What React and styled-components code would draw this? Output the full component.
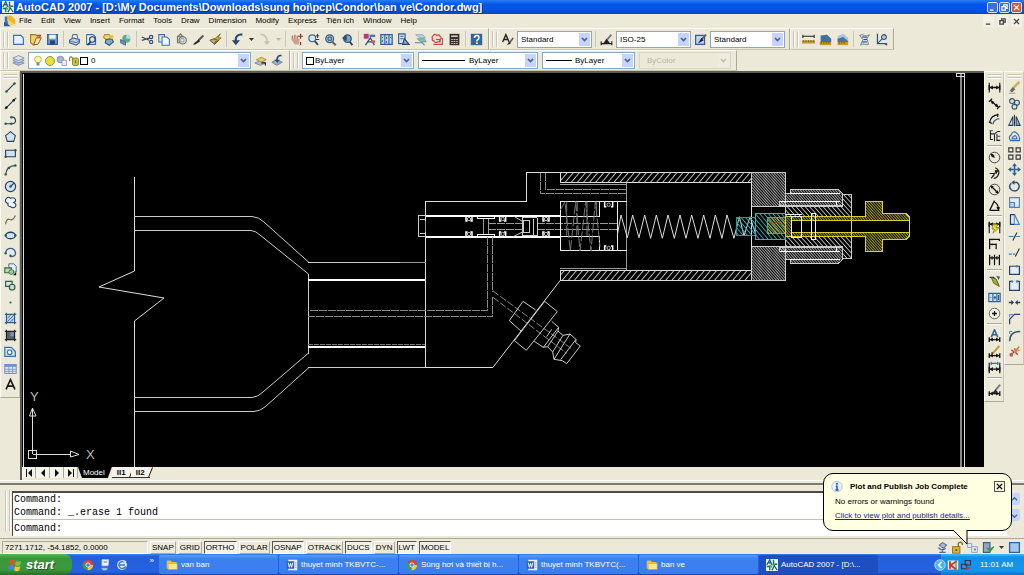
import React from 'react';
import styled, { createGlobalStyle, css } from 'styled-components';

const FACE = '#ece9d8';
const SHADOW = '#aca899';
const UI_FONT = '"Liberation Sans", Arial, sans-serif';

const GlobalStyle = createGlobalStyle`
  * { box-sizing: border-box; }
  body { margin: 0; background: ${FACE}; font-family: ${UI_FONT}; font-size: 8px; line-height: 12px; color: #000; }
  button, select, input { font: inherit; color: inherit; margin: 0; padding: 0; border: 0; background: none; border-radius: 0; }
  svg { display: block; flex: none; }
`;

/* ---------- icons, all drawn on a 16 x 16 grid ---------- */

const N = '#24405c';
const B = '#3f6fa8';
const L = '#cfe3f5';
const line = (d, c = N, w = 1.4, f = 'none') => <path d={d} stroke={c} strokeWidth={w} fill={f} />;
const dot = (x, y, c = '#2b5a50', r = 1.5) => <circle cx={x} cy={y} r={r} fill={c} />;
const dimBar = (y = 12) => (
  <>
    {line(`M2 ${y}H14M1.5 ${y - 3}V${y + 3}M14.5 ${y - 3}V${y + 3}`, '#111', 1.6)}
    <path d={`M2 ${y}l4-2.5v5zM14 ${y}l-4-2.5v5z`} fill="#111" />
  </>
);

const ICONS = {
  app: (
    <>
      <rect width="16" height="16" fill="#e9f3f2" />
      {line('M1 8L5 1l3 7M3 5h4', '#1d6b6e', 1.8)}
      {line('M10 1v6h5M1 10h4v5M8 15l3-6 4 6', '#1d6b6e', 1.8)}
      <path d="M5 8l3 3M9 9l3-3" stroke="#4aa36b" strokeWidth="2" />
    </>
  ),
  doc: (
    <>
      <path d="M1 2h5l4 6-3 6H1z" fill="#3f74c4" />
      <path d="M4 1h6l5 5v7L5 8z" fill="#f0b52c" />
      <path d="M4 5l11 9H6z" fill="#f7d469" />
      <path d="M0 9l9 6H0z" fill="#2d58a3" />
    </>
  ),
  newFile: line('M2 3h9l3 3v8H2z', B, 1.4, '#e7f2fc'),
  open: (
    <>
      {line('M2 2h6l5 4-7 9L2 12z', '#a8722c', 1.3, '#f6cf6e')}
      {line('M6 14l3-8h6l-4 8z', '#8c5a22', 1.2, '#fbe6a4')}
      {line('M10 3l4 0-1 3', '#b0452d', 1.6)}
    </>
  ),
  save: (
    <>
      {line('M2 2h12v12H2z', '#2f5f8f', 1.4, '#6d9ccc')}
      <rect x="4" y="2" width="8" height="5" fill="#e9f1f8" />
      <rect x="5" y="9" width="6" height="5" fill="#27486b" />
    </>
  ),
  plot: (
    <>
      {line('M5 6l1-4h5l1 5', '#56729a', 1.3, '#fff')}
      {line('M2 9l4-3 8 2v4l-4 3-8-3z', '#45638f', 1.4, '#b9cbe2')}
      {line('M3 10l7 2 4-3', '#45638f', 1)}
    </>
  ),
  preview: (
    <>
      {line('M2 2h8l3 3v9H2z', B, 1.3, '#e7f2fc')}
      <circle cx="9" cy="8" r="3.4" fill="#d5e9f8" stroke={N} strokeWidth="1.4" />
      {line('M7 11l-4 4', N, 2.2)}
    </>
  ),
  publish: (
    <>
      {line('M3 2h6l2 4-4 3-5-3z', '#9a7b25', 1.2, '#f2d669')}
      {line('M5 8l7-1 2 4-5 4-5-3z', '#35557f', 1.4, '#86a9d2')}
      <circle cx="12" cy="5" r="2.4" fill="#f2c230" />
    </>
  ),
  dwf: (
    <>
      <circle cx="9" cy="7" r="5" fill="#65a889" />
      <path d="M9 2a5 5 0 015 5H9z" fill="#b9dbe8" />
      {line('M2 8l6 3v4l-6-3z', '#36597f', 1, '#7396c0')}
    </>
  ),
  cut: (
    <>
      {line('M1 5l9 4M1 9l10-3', '#3a4a63', 1.5)}
      <circle cx="12.5" cy="5" r="2" fill="none" stroke="#33517d" strokeWidth="1.5" />
      <circle cx="12.5" cy="11" r="2" fill="none" stroke="#33517d" strokeWidth="1.5" />
    </>
  ),
  copy: (
    <>
      {line('M1 2h7v9H1z', B, 1.3, '#dcebf9')}
      {line('M5 5h6l3 3v7H5z', B, 1.3, '#f0f7fd')}
    </>
  ),
  paste: (
    <>
      {line('M3 4h7v8H3z', '#7c7356', 1.3, '#d6cfb4')}
      <circle cx="9.5" cy="9" r="4.500" fill="#dfe6ea" stroke="#68706f" strokeWidth="1.3" />
      {line('M7 7h4v4H7z', '#8b9392', 1)}
      {line('M4 4l3-3 2 3', '#68706f', 1.3)}
    </>
  ),
  brush: (
    <>
      {line('M14 3L8 9', '#555', 2.4)}
      <path d="M8 8l2 2-6 4-3 0z" fill="#222" />
    </>
  ),
  blockEdit: (
    <>
      {line('M1 9l5-2 6 2-5 5z', '#5b5437', 1.2, '#b8ae7d')}
      <path d="M14 1L6 8h4l-4 5 9-7h-4z" fill="#e8b31c" stroke="#6b5b1b" strokeWidth=".9" />
    </>
  ),
  undo: (
    <>
      {line('M14 2C8 1 5 5 6 11', '#27476f', 2.6)}
      <path d="M1 9h10l-5 6z" fill="#27476f" />
    </>
  ),
  redo: (
    <>
      {line('M3 2c6-1 8 4 8 9', '#c6c3b4', 2)}
      <path d="M7 10h8l-4 5z" fill="#c6c3b4" />
    </>
  ),
  pan: (
    <>
      {line('M3 8V3M6 8V2M9 8V3', '#b78679', 2)}
      <path d="M1 7l11 0-1 7H6z" fill="#cf9f90" />
      {line('M13 1v6M10 4h6M13 11v4', '#8a2f2b', 1.5)}
    </>
  ),
  zoom: (
    <>
      <circle cx="6.500" cy="6.500" r="4.200" fill="#d4e8f5" stroke="#4d6780" strokeWidth="1.5" />
      {line('M9.500 10l4 4.500', '#33465c', 2.2)}
      {line('M13 1v5M11 3.500h4M11 8h4', '#333', 1.2)}
    </>
  ),
  zoomWin: (
    <>
      <circle cx="7" cy="7" r="4.800" fill="#9cc8e4" stroke="#345a7c" strokeWidth="1.500" />
      {line('M5 5h4v4H5z', '#234', 1)}
      {line('M10.500 11l4 4', '#7a5a3a', 2.4)}
    </>
  ),
  zoomPrev: (
    <>
      <circle cx="8" cy="7" r="4.600" fill="#79a7cc" stroke="#314e6d" strokeWidth="1.500" />
      {line('M11 11l3 4', '#33465c', 2.4)}
      <path d="M1 6l6-4v8z" fill="#334a63" />
    </>
  ),
  props: (
    <>
      <rect x="1" y="1" width="6" height="6" fill="#b33c7c" />
      <rect x="8" y="2" width="7" height="3" fill="#5473b8" />
      {line('M3 15l6-9 5 9M5 11h7', '#31507e', 1.6)}
      <rect x="10" y="9" width="5" height="3" fill="#b9625f" />
    </>
  ),
  center: (
    <>
      {line('M1 2h14v12H1z', '#345f93', 1.5, '#bcd5ee')}
      {line('M6 2v12M11 2v12M3 5v1M8 5v2M13 5v1M8 10v2M3 9v2', '#345f93', 1.3)}
    </>
  ),
  palette: (
    <>
      {line('M2 1h8v12H2z', '#345f93', 1.4, '#cfe0f2')}
      {line('M4 4h4M4 7h4', '#345f93', 1.2)}
      {line('M7 14h8L9 7z', '#2b4568', 1.4, '#86a9cc')}
    </>
  ),
  sheet: (
    <>
      {line('M2 2h9l3 4H7z', '#88a6c8', 1, '#b9d0e8')}
      {line('M4 7h9l2 4H8z', '#6f9a8b', 1, '#8fb9a8')}
      {line('M1 12h9l3 3', '#5f82ab', 1.5)}
    </>
  ),
  markup: (
    <>
      {line('M3 3q2-3 4 0q3-2 4 1q3 2 0 4q1 3-3 3q-3 2-4-1q-4-1-2-3q-2-2 1-4z', '#c04444', 1.4, '#f5d6cf')}
      {line('M6 8h5v4M3 14h11V6', '#b84b45', 1.4)}
    </>
  ),
  calc: (
    <>
      <rect x="2" y="1" width="12" height="14" fill="#3b2d2a" />
      <rect x="4" y="3" width="8" height="2" fill="#c7d4bf" />
      {line('M4 8h8M4 10.500h8M4 13h8', '#d8c7bd', 1.2)}
      {line('M6.500 6v9M9.500 6v9', '#3b2d2a', 1)}
    </>
  ),
  help: (
    <>
      <rect x="1" y="1" width="14" height="14" fill="#2f679d" />
      {line('M5.500 6q0-3 3-3t2.500 3q0 1.500-2.500 3v1.500', '#fff', 1.8)}
      <rect x="7.500" y="11.500" width="2" height="2" fill="#fff" />
    </>
  ),
  textStyle: (
    <>
      {line('M2 11L6 2l4 9M4 8h4', '#222', 1.7)}
      {line('M15 6l-5 7', '#555', 2)}
      <path d="M10 11l2 2-5 2z" fill="#222" />
    </>
  ),
  dimStyle: (
    <>
      {line('M1 13h14M1.500 10v5M14.500 10v5', '#222', 1.4)}
      {line('M14 2L8 9', '#777', 2.200)}
      <path d="M8 7l4 5-9 2z" fill="#222" />
    </>
  ),
  tableStyle: (
    <>
      {line('M2 3h11v11H2z', '#345f93', 1.500, '#bcd5ee')}
      {line('M15 2L9 8', '#555', 2)}
      <path d="M9 6l3 3-7 4z" fill="#222" />
    </>
  ),
  dist: (
    <>
      {line('M1 4h14M1 2v4M15 2v4', '#222', 1.300)}
      <rect x="0" y="9" width="16" height="4" fill="#c59a2d" />
      {line('M2 9v2M5 9v2M8 9v2M11 9v2M14 9v2', '#5d4710', 1)}
    </>
  ),
  area: (
    <>
      <path d="M2 3l8-1 5 5v4H2z" fill="#3f719e" />
      <rect x="1" y="11" width="14" height="4" fill="#c59a2d" />
      {line('M3 11v2M6 11v2M9 11v2M12 11v2', '#5d4710', 1)}
    </>
  ),
  mass: (
    <>
      <path d="M2 4l7-3 6 5v5H2z" fill="#a7c5df" />
      <path d="M2 7l7-2 6 5v1H2z" fill="#47749e" />
      <rect x="2" y="11" width="13" height="4" fill="#c59a2d" />
      {line('M4 11v2M7 11v2M10 11v2', '#5d4710', 1)}
    </>
  ),
  list: (
    <>
      {line('M2 3q3-2 6 0t6-1l-3 5 2 7q-3 1-5 0t-5 1l3-7z', '#6e8ba6', 1.200, '#c9d8e4')}
      {line('M5 5h6M7 8h4M5 11h6', '#34495e', 1.200)}
    </>
  ),
  idPoint: (
    <>
      {line('M3 1v12h12', '#34557d', 1.600)}
      {line('M3 13l7-7M12 13l3 2', '#34557d', 1.300)}
      <circle cx="11" cy="5" r="3" fill="#a9c4dc" stroke="#34557d" strokeWidth="1.300" />
    </>
  ),
  layers: (
    <>
      {line('M1 11l7-3 7 3-7 3z', '#7389a8', 1, '#aebfd6')}
      {line('M1 8l7-3 7 3-7 3z', '#7389a8', 1, '#c3d0e2')}
      {line('M1 5l7-3 7 3-7 3z', '#7389a8', 1, '#dfe7f1')}
    </>
  ),
  layerPrev: (
    <>
      {line('M1 11l7-3 6 3-6 3z', '#6b7fa0', 1, '#aebfd6')}
      {line('M3 7l6-3 6 3-6 3z', '#9a8630', 1, '#e3cf6d')}
      {line('M9 11h5v3', '#222', 1.400)}
    </>
  ),
  layerState: (
    <>
      {line('M1 10l6-3 7 3-7 4z', '#62799c', 1, '#9fb2cc')}
      {line('M13 2q-5-1-6 6', '#2f4c74', 2)}
      <path d="M4 7h7l-3 4z" fill="#2f4c74" />
    </>
  ),
  bulb: (
    <>
      <circle cx="8" cy="6" r="4.500" fill="#fbf7a8" stroke="#a9a24a" strokeWidth="1" />
      <rect x="6" y="10" width="4" height="4" fill="#8a8a7c" />
    </>
  ),
  sun: <circle cx="8" cy="8" r="6" fill="#e6e23a" stroke="#8f8c26" strokeWidth="1.200" />,
  vpFreeze: (
    <>
      <circle cx="6" cy="6" r="4.500" fill="#a9b6d0" stroke="#7583a3" strokeWidth="1" />
      {line('M8 7h6v7H8z', '#8c95a5', 1, '#e9ecf2')}
    </>
  ),
  lock: (
    <>
      {line('M2 8V4q2-3 4 0v3', '#8b8628', 1.500)}
      <rect x="6" y="4" width="8" height="10" rx="2" fill="#c3c53a" stroke="#77751f" />
      {line('M10 7v4', '#77751f', 1.500)}
    </>
  ),
  line: <>{line('M3 13L13 3')}{dot(3, 13)}{dot(13, 3)}</>,
  xline: <>{line('M1 15L15 1')}{dot(3, 13, '#111')}{dot(12, 4, '#111')}</>,
  pline: <>{line('M2 12h9q4-1 3-5t-5-3')}{dot(2, 12)}{dot(9, 12)}{dot(9, 4)}</>,
  polygon: line('M8 2l6 5-2 7H4L2 7z', N, 1.300, L),
  rect: <>{line('M2 4h12v8H2z', N, 1.400, L)}{dot(2, 12)}{dot(14, 4)}</>,
  arc: <>{line('M2 14Q3 4 14 3')}{dot(2, 14)}{dot(6, 6)}{dot(14, 3)}</>,
  circle: (
    <>
      <circle cx="8" cy="8" r="6.300" fill={L} stroke={N} strokeWidth="1.400" />
      {line('M8 8l4-4')}{dot(8, 8)}
    </>
  ),
  cloud: line('M4 9Q0 6 3 3q3-3 5 0q4-2 6 1q1 3-2 4q4 2 2 5q-3 3-6 0q-4 0-3-4z', N, 1.300, '#eef4f6'),
  spline: line('M2 14q1-8 5-6t7-5', '#6e6544', 1.400),
  ellipse: <><ellipse cx="8" cy="8" rx="6" ry="4" fill={L} stroke={N} strokeWidth="1.600" />{dot(2, 8)}{dot(14, 8)}</>,
  ellipseArc: <>{line('M2 8q1-5 6-5t6 5-6 5', '#3d6080', 1.6, '#dfeaf0')}{dot(2, 9)}{dot(8, 12)}</>,
  insert: (
    <>
      {line('M6 1h6l3 3v7H6z', B, 1.200, '#e4effa')}
      {line('M1 6h8v6H1z', '#2c6b3c', 1.400, '#bfdab0')}
      <circle cx="9" cy="11" r="3" fill="#a8c99a" stroke="#2c6b3c" />
      <path d="M11 15h4v-4z" fill="#111" />
    </>
  ),
  block: (
    <>
      {line('M2 3h8v6H2z', '#2c5b4c', 1.400, '#dfe9dc')}
      <circle cx="10" cy="10" r="3.500" fill="#c6dcc8" stroke="#2c5b4c" strokeWidth="1.400" />
    </>
  ),
  point: dot(8, 8, '#2b5a50', 1.300),
  hatch: (
    <>
      <rect x="3" y="3" width="10" height="10" fill="#b6d1ea" />
      {line('M3 1v14M13 1v14M1 3h14M1 13h14', '#2f5e8c', 1.400)}
      {line('M4 8l4-4M4 12l8-8M8 12l4-4', '#2f5e8c', 1)}
    </>
  ),
  gradient: (
    <>
      <rect x="3" y="3" width="10" height="10" fill="#55636e" />
      {line('M3 1v14M13 1v14M1 3h14M1 13h14', '#1c252d', 1.500)}
      <rect x="8" y="4" width="4" height="5" fill="#8494a0" />
    </>
  ),
  region: (
    <>
      {line('M1 3h8l5 5v6H1z', B, 1.500, L)}
      <circle cx="7" cy="9" r="2.800" fill="#fff" stroke={B} strokeWidth="1.400" />
    </>
  ),
  table: (
    <>
      <rect x="1" y="3" width="14" height="11" fill="#dce9f8" stroke="#5a7fc0" />
      <rect x="1" y="3" width="14" height="3" fill="#6f93d0" />
      {line('M1 9h14M1 11.500h14M6 6v8M10.500 6v8', '#6f93d0', 1)}
    </>
  ),
  mtext: line('M2.500 14L8 2l5.500 12M4.500 10h7', '#1a1a1a', 2),
  dimLinear: <>{dimBar(8)}{line('M1.500 2v12M14.500 2v12', '#111', 1.300)}</>,
  dimAligned: (
    <>
      {line('M3 4l10 9M1 6l4-4M11 15l4-4', '#111', 1.500)}
      <path d="M3 4l5 2-3 3zM13 13l-5-2 3-3z" fill="#111" />
    </>
  ),
  dimArc: <>{line('M2 12Q3 3 13 2', '#111', 1.500)}{line('M6 14q1-6 8-7', '#4a5d70', 1.500)}{line('M1 11l4 2M12 1v4', '#111', 1.300)}</>,
  dimOrd: <>{line('M3 2v11h3M3 6h5l4-3h3M8 7v8M11 6v8h4', '#222', 1.300)}{line('M2 2h4M12 9h3', B, 1.500)}</>,
  dimRadius: (
    <>
      <circle cx="8" cy="8" r="6.500" fill="none" stroke="#444" strokeWidth="1.200" />
      {line('M8 8L4 4', '#111', 1.500)}
      <path d="M3 3l5 2-3 3z" fill="#111" />
    </>
  ),
  dimJog: <>{line('M9 1q6 3 4 8t-6 5M2 8h6l-2 4M4 14l5-7', '#222', 1.500)}<path d="M8 4h5l-3 5z" fill="#111" /></>,
  dimDia: (
    <>
      <circle cx="8" cy="8" r="6.500" fill="none" stroke="#444" strokeWidth="1.200" />
      {line('M4 4l8 8', '#111', 1.500)}
      <path d="M3 3l4 1-3 3zM13 13l-4-1 3-3z" fill="#111" />
    </>
  ),
  dimAng: <>{line('M2 14h12M2 14L8 2M7 3q6 3 6 10', '#111', 1.500)}<path d="M13 14l-3-4h5z" fill="#111" /></>,
  dimQuick: <>{dimBar(4)}{line('M1.500 2v13M14.500 2v13', '#111', 1.300)}<path d="M6 4h6l-2 4h4l-8 7 2-5H5z" fill="#e2d531" stroke="#777016" strokeWidth=".8" /></>,
  dimBase: line('M2 2v13M2 3h12M2 9h8M14 2v3M10 8v7M5 2v2M5 8v2', '#111', 1.500),
  dimCont: line('M2 2v13M8 2v13M14 2v13M2 6h12M5 4v4M11 4v4', '#111', 1.500),
  leader: <>{line('M2 3h5l6 9', '#333', 1.400)}<path d="M4 3l6 2 4 9-7-4z" fill="#a3ae2f" stroke="#4f5a1a" /><path d="M10 1l5 1-2 4z" fill="#2d6b8c" /></>,
  tolerance: <>{line('M1 3h14v10H1zM6 3v10M11 3v10', '#2f6299', 1.400, '#cfe0f2')}{line('M3 8h1M13 5v6M7 8h3M8.500 6v4', '#2f6299', 1.500)}</>,
  centerMark: (
    <>
      <circle cx="8" cy="8" r="6.500" fill="#fff" fillOpacity=".4" stroke="#555" strokeWidth="1.100" />
      {line('M8 5v6M5 8h6', '#111', 1.600)}
    </>
  ),
  dimEdit: <>{dimBar(13)}{line('M4 10L8 1l4 9M6 7h4', '#2d5f93', 1.800)}</>,
  dimTEdit: <>{dimBar(13)}{line('M14 1L7 9l-2 2', '#c79b29', 2.400)}{line('M5 9v3', '#222', 1.500)}</>,
  dimUpdate: <>{dimBar(10)}{line('M1.500 2v13M14.500 2v13', '#111', 1.400)}{line('M3 3h10M4 1v4M12 1v4', B, 1.400)}</>,
  dimSt: <>{dimBar(13)}{line('M15 2l-6 7', '#777', 2.200)}<path d="M9 8l3 3-8 3z" fill="#222" /></>,
  erase: <>{line('M14 1L7 8', '#c9b04a', 3)}<path d="M6 7l3 3-4 4-3-2z" fill="#6e6b60" />{line('M1 15h8', '#8d8a7c', 1)}</>,
  copyObj: (
    <>
      {[[5, 5], [11, 7], [8, 12]].map(([x, y]) => (
        <circle key={x} cx={x} cy={y} r="3" fill="#dce6ea" stroke="#3a5365" strokeWidth="1.400" />
      ))}
    </>
  ),
  mirror: <>{line('M6 3v11H1z', N, 1.300, L)}{line('M10 3v11h5z', N, 1.300, '#8fb4d2')}{line('M8 1v14', '#111', 1)}</>,
  offset: <>{line('M3 13Q0 8 4 6q2-6 7-2 4 3 3 9z', B, 1.500)}{line('M5 11q0-3 2-3 3-3 4 3z', B, 1.400, L)}</>,
  array: line('M1 1h5v5H1zM10 1h5v5h-5zM1 10h5v5H1zM10 10h5v5h-5z', '#333', 1.400, '#f4f3ea'),
  move: <>{line('M8 2v12M2 8h12', '#2f6299', 2)}<path d="M8 0l3 4H5zM8 16l3-4H5zM0 8l4-3v6zM16 8l-4-3v6z" fill="#2f6299" /></>,
  rotate: <>{line('M4 4q-4 4 0 8 4 3 8 0 4-5-1-9H7', '#32587d', 1.900)}<path d="M8 0v6L4 3z" fill="#32587d" /></>,
  scale: <>{line('M2 2h12v12H2z', '#4b83bf', 1.400, '#e3eef9')}{line('M2 8h6v6H2z', '#4b83bf', 1.400, '#b6d1ea')}</>,
  stretch: <>{line('M3 2h5v12H3z', N, 1.400, L)}{line('M8 2l6 12H8', '#4b83bf', 1.400, '#e3eef9')}</>,
  trim: <>{line('M1 8h6', '#4b83bf', 1.500)}{line('M10 8h5', '#4b83bf', 1.200)}{line('M11 3l-5 10', '#333', 1.400)}</>,
  extend: <>{line('M1 10h4M6 10h3', '#4b83bf', 1.500)}{line('M14 3L9 13', '#333', 1.400)}</>,
  breakPt: <>{line('M2 4h12v10H2z', '#28435c', 1.500, '#e3eef9')}{dot(11, 4, '#4b83bf')}</>,
  breakObj: <>{line('M5 3H2v11h12V3h-3', '#28435c', 1.500, '#e3eef9')}{dot(5, 3, '#4b83bf')}{dot(11, 3, '#4b83bf')}</>,
  join: <>{line('M1 8h5M10 8h5', '#28435c', 1.600)}<path d="M7.500 8L4 5v6zM8.500 8L12 5v6z" fill="#28435c" /></>,
  chamfer: <>{line('M2 15V9l6-6h7', '#28435c', 1.500)}{line('M2 6V3h4', '#4b83bf', 1.200)}</>,
  fillet: <>{line('M2 15Q2 3 15 3', '#32587d', 1.900)}{line('M2 6V3h3', '#4b83bf', 1.200)}</>,
  explode: <>{line('M3 13l5-5M8 4l1 3M12 12l-3-3M4 6l3 2', '#a54a33', 1.600)}{line('M9 7l5-5M12 7l2-1', '#d17d3a', 1.800)}{dot(4, 12, '#b3664d', 2.400)}{dot(10, 7, '#c98263', 1.800)}</>,
  info: (
    <>
      <circle cx="8" cy="7.500" r="7" fill="#e8f0fb" stroke="#9fb4d6" />
      {line('M8 6v6M6.500 6.500H8M6 12h4', '#1d49b0', 1.800)}
      {dot(8, 3.700, '#1d49b0', 1.300)}
    </>
  ),
  comm: (
    <>
      {line('M4 5l4-3 5 3-4 4z', '#5b6f8e', 1.300, '#a9bad4')}
      {line('M3 8q4 5 9 1M8 10v4M4 14h8', '#5b6f8e', 1.600)}
    </>
  ),
  padlock: <>{line('M9 7V3q2-3 5 0v2', '#8b7420', 1.700)}<rect x="2" y="7" width="9" height="8" fill="#e0b52a" stroke="#77611a" />{dot(6.5, 11, '#5a4a14', 1.300)}</>,
  pubTray: <>{line('M2 3h5v5H2zM7 7h7v7H7z', '#8fa3bf', 1.200, '#e4ebf5')}{dot(11, 10.500, '#5c7fb2', 1.400)}</>,
  std: <>{line('M3 2h8v12H3z', '#4a5a78', 1.400, '#93a8c9')}<path d="M8 9l3 4 5-6-5 3z" fill="#2f9a3f" stroke="#2f9a3f" strokeWidth="1.300" /></>,
  clean: line('M2 2h12v12H2z', '#31639d', 1.700, '#a5c8ec'),
  folder: (
    <>
      <path d="M1 2h5l2 2h6v9H1z" fill="#e8bf45" />
      <path d="M3 6h12v8H3z" fill="#fbe58d" stroke="#c89b2c" strokeWidth=".6" />
    </>
  ),
  word: (
    <>
      <rect x="3" y="1" width="12" height="14" fill="#f3f6fc" />
      <rect x="1" y="3" width="10" height="10" fill="#335fae" />
      {line('M3 5l1.500 6L6 6l1.500 5L9 5', '#fff', 1.300)}
      {line('M12 5h2M12 8h2M12 11h2', '#6a8bc4', 1)}
    </>
  ),
  chrome: (
    <>
      <path d="M8 8L2 4.500A7 7 0 0115 8z" fill="#d9422f" />
      <path d="M8 8h7a7 7 0 01-8 7z" fill="#f2c82c" />
      <path d="M8 8l-1 7A7 7 0 012 4.500z" fill="#41a047" />
      <circle cx="8" cy="8" r="3.300" fill="#fff" />
      <circle cx="8" cy="8" r="2.400" fill="#4a83d6" />
    </>
  ),
  desktop: (
    <>
      {line('M4 1h9l-1 8H4z', '#bcd0ee', 1.200, '#f1f6fd')}
      {line('M3 12h9l-2 3H5z', '#5f88c9', 1, '#c3d6f2')}
      {line('M6 4h5', '#5f88c9', 1.500)}
    </>
  ),
  mail: (
    <>
      <circle cx="8" cy="8" r="6.500" fill="#e9f2fd" />
      {line('M12 5Q8 2 5 5T6 12q4 2 7-2M5 8h7', '#2f74c9', 1.800)}
      <path d="M9 1l5 2-3 3z" fill="#cfe0f8" />
    </>
  ),
  flag: (
    <>
      <path d="M2 3q3-2 6 0L7 8Q4 6 1 8z" fill="#e8502c" />
      <path d="M9 3q3 2 6 0l-1 5q-3 2-6 0z" fill="#7cc142" />
      <path d="M1 9q3-2 6 0l-1 5q-3-2-6 0z" fill="#3f8be0" />
      <path d="M8 9q3 2 6 0l-1 5q-3 2-6 0z" fill="#f6c32c" />
    </>
  ),
  kasp: (
    <>
      <rect x="1" y="2" width="14" height="12" fill="#f0e8e6" />
      {line('M4 3v10M13 3L5 8l7 6', '#d03a2c', 2.600)}
      {line('M12 2v12', '#4b8a4e', 1.500)}
    </>
  ),
  net: <>{line('M7 2h7v6H7zM2 7h7v6H2z', '#25355e', 1.400, '#5f7fbc')}{line('M8 14l6-3', '#c23b35', 2)}</>,
  hideTray: (
    <>
      <circle cx="8" cy="8" r="7" fill="#4ab2f5" stroke="#bfe3fb" strokeWidth="1.200" />
      {line('M10 4L6 8l4 4', '#fff', 2)}
    </>
  ),
};

const Icon = ({ name, size = 13 }) => (
  <svg width={size} height={size} viewBox="0 0 16 16" aria-hidden="true">{ICONS[name]}</svg>
);

/* ---------- window frame ---------- */

const Window = styled.div`
  position: relative;
  display: flex;
  flex-direction: column;
  min-height: 100vh;
  overflow: hidden;
`;

const TitleBar = styled.header`
  display: flex;
  align-items: center;
  gap: 1px;
  height: 14px;
  padding: 0 2px;
  background: linear-gradient(#2a7bf5, #0058e6 30%, #0054e0 70%, #0046c4);
  color: #fff;
`;

const Title = styled.h1`
  flex: 1;
  margin: 0 0 0 1px;
  font-size: 11px;
  line-height: 13px;
  white-space: nowrap;
  text-shadow: 1px 1px #0a2f87;
`;

const CaptionButton = styled.button`
  display: grid;
  place-items: center;
  width: 11px;
  height: 11px;
  border: 1px solid #d5e2fb;
  border-radius: 2px;
  background: ${(p) => (p.$close ? '#dd5432' : '#3a6fe4')};
`;

const MenuBar = styled.nav`
  display: flex;
  align-items: center;
  gap: 9px;
  height: 14px;
  padding: 0 2px 0 4px;
`;

const MenuIcon = styled.span`
  margin-right: -6px;
`;

const MenuItem = styled.button`
  line-height: 12px;
  white-space: nowrap;
`;

const MdiButtons = styled.div`
  display: flex;
  gap: 3px;
  margin-left: auto;
`;

const MdiButton = styled.button`
  display: grid;
  place-items: center;
  width: 11px;
  height: 12px;
  background: #f3f1e6;
`;

/* ---------- toolbars ---------- */

const ToolRow = styled.div`
  display: flex;
  height: ${(p) => p.$height}px;
`;

const Bar = styled.div`
  display: flex;
  align-items: center;
  padding: 0 3px 0 2px;
  border: 1px solid;
  border-color: #fbfaf5 ${SHADOW} #c9c5b2 #fbfaf5;
`;

const Grip = styled.span`
  flex: none;
  width: 5px;
  height: 17px;
  margin-right: 2px;
  border: 1px solid;
  border-color: transparent #c9c5b2;
  box-shadow: inset 1px 0 #fff, 1px 0 #fff;
`;

const ToolButton = styled.button`
  display: grid;
  place-items: center;
  flex: none;
  width: ${(p) => p.$width || 17}px;
  height: 17px;
`;

const Divider = styled.span`
  flex: none;
  width: 1px;
  height: 16px;
  margin: 0 2px;
  background: #cbc7b5;
`;

const ComboBox = styled.div`
  display: grid;
  align-items: center;
  width: ${(p) => p.$width}px;
  height: 17px;
  margin: 0 ${(p) => (p.$wide ? 2 : 1)}px;
  border: 1px solid ${(p) => (p.$off ? '#d9d5c3' : '#8fa5c4')};
  background: ${(p) => (p.$off ? FACE : '#fff')};
  & > * { grid-area: 1 / 1; }
`;

const ComboSelect = styled.select`
  appearance: none;
  width: 100%;
  height: 15px;
  padding-left: ${(p) => p.$indent || 3}px;
  line-height: 15px;
  opacity: 1;
  &:disabled { color: #b9b5a4; }
`;

const ComboMark = styled.span`
  display: flex;
  align-items: center;
  padding-left: 3px;
  pointer-events: none;
`;

const ComboArrow = styled.span`
  display: grid;
  place-items: center;
  justify-self: end;
  width: 11px;
  height: 13px;
  margin-right: 1px;
  background: ${(p) => (p.$off ? '#efecdf' : '#c4d4fb')};
  pointer-events: none;
`;

const Swatch = styled.span`
  width: 8px;
  height: 8px;
  border: 1px solid #000;
  background: #fff;
`;

const Rule = styled.span`
  width: ${(p) => p.$width}px;
  height: 1px;
  background: #000;
`;

const Chevron = ({ color = '#4d6185' }) => (
  <svg width="7" height="5" viewBox="0 0 7 5" aria-hidden="true">
    <path d="M1 1l2.500 2.500L6 1" fill="none" stroke={color} strokeWidth="1.700" />
  </svg>
);

const Combo = ({ label, value, width, indent, off, wide, children }) => (
  <ComboBox $width={width} $off={off} $wide={wide}>
    <ComboSelect aria-label={label} $indent={indent} disabled={off} defaultValue={value}>
      <option value={value}>{value}</option>
    </ComboSelect>
    {children && <ComboMark>{children}</ComboMark>}
    <ComboArrow $off={off}><Chevron color={off ? '#c3bfae' : undefined} /></ComboArrow>
  </ComboBox>
);

const Tool = ({ name }) => <ToolButton aria-label={name}><Icon name={name} /></ToolButton>;

const DropTool = ({ label, off }) => (
  <ToolButton $width={10} aria-label={label}>
    <svg width="5" height="3" viewBox="0 0 5 3" aria-hidden="true"><path d="M0 0h5L2.500 3z" fill={off ? '#b9b5a4' : '#333'} /></svg>
  </ToolButton>
);

const STANDARD = [
  ['newFile', 'open', 'save'],
  ['plot', 'preview', 'publish', 'dwf'],
  ['cut', 'copy', 'paste', 'brush', 'blockEdit'],
  ['undo', '>undo list', 'redo', '>redo list'],
  ['pan', 'zoom', 'zoomWin', 'zoomPrev'],
  ['props', 'center', 'palette', 'sheet', 'markup', 'calc'],
  ['help'],
];

/* ---------- work area ---------- */

const Work = styled.main`
  display: flex;
  flex: 1;
  align-items: stretch;
`;

const SideTools = styled.div`
  display: flex;
  align-items: flex-start;
  flex: none;
`;

const SideBar = styled.div`
  display: flex;
  flex-direction: column;
  align-items: center;
  width: 20px;
  padding: 2px 0 4px;
  border: 1px solid;
  border-color: #fbfaf5 #c9c5b2 ${SHADOW} #fbfaf5;
`;

const SideGrip = styled.span`
  width: 15px;
  height: 4px;
  margin-bottom: 1px;
  border: 1px solid;
  border-color: #c9c5b2 transparent;
  box-shadow: inset 0 1px #fff, 0 1px #fff;
`;

const SideStack = styled.div`
  display: grid;
  grid-auto-rows: 1fr;
  height: ${(p) => p.$height}px;
`;

const SideButton = styled.button`
  display: grid;
  place-items: center;
  width: 18px;
  min-height: 16px;
`;

const SideDivider = styled.span`
  width: 15px;
  height: 2px;
  margin: 2px 0;
  border-top: 1px solid ${SHADOW};
  border-bottom: 1px solid #fff;
`;

const DRAW = ['line', 'xline', 'pline', 'polygon', 'rect', 'arc', 'circle', 'cloud', 'spline', 'ellipse', 'ellipseArc', 'insert', 'block', 'point', 'hatch', 'gradient', 'region', 'table', 'mtext'];
const MODIFY = ['erase', 'copyObj', 'mirror', 'offset', 'array', 'move', 'rotate', 'scale', 'stretch', 'trim', 'extend', 'breakPt', 'breakObj', 'join', 'chamfer', 'fillet', 'explode'];
const DIMENSION = [
  ['dimLinear', 'dimAligned', 'dimArc', 'dimOrd'],
  ['dimRadius', 'dimJog', 'dimDia', 'dimAng'],
  ['dimQuick', 'dimBase', 'dimCont'],
  ['leader', 'tolerance', 'centerMark'],
  ['dimEdit', 'dimTEdit', 'dimUpdate'],
  ['dimSt'],
];

const SideTool = ({ name }) => <SideButton aria-label={name}><Icon name={name} /></SideButton>;

const DocumentPane = styled.section`
  display: flex;
  flex-direction: column;
  flex: 1;
  min-width: 0;
  border: solid #5c5b52;
  border-width: 2px 0 0 2px;
`;

const Canvas = styled.svg`
  flex: 1 1 0;
  width: 100%;
  min-height: 0;
  background: #000;
`;

const TabStrip = styled.div`
  display: flex;
  height: 13px;
  background: ${FACE};
`;

const TabArrow = styled.button`
  display: grid;
  place-items: center;
  width: 14px;
  height: 11px;
  border-right: 1px solid ${SHADOW};
  background: #f6f4ea;
`;

const SheetTab = styled.button`
  position: relative;
  height: 11px;
  padding: 0 5px;
  line-height: 11px;
  ${(p) => (p.$on
    ? css`
      padding: 0 7px 0 5px;
      background: #000;
      color: #fff;
      clip-path: polygon(0 0, 100% 0, calc(100% - 4px) 100%, 4px 100%);
    `
    : css`
      font-weight: bold;
      background: #f6f4ea;
      border-bottom: 1px solid #333;
      &::after {
        content: '';
        position: absolute;
        top: 0;
        right: -1px;
        width: 1px;
        height: 11px;
        background: #222;
        transform: rotate(22deg);
      }
    `)}
`;

/* ---------- the drawing ---------- */

const ORing = ({ x, y, flip, w = 22 }) => (
  <g transform={`translate(${x} ${y})${flip ? ' scale(1 -1)' : ''}`} shapeRendering="auto" stroke="#fff">
    <path d={`M2 0V14H7M${w - 2} 0V14H${w - 7}`} strokeWidth="1.500" />
    <circle cx={w / 2} cy="8" r="5" stroke="#bbb" />
  </g>
);

const GREY = '#9a9a9a';

const Body = () => (
  <g transform="translate(400 150) scale(.333333)" shapeRendering="crispEdges">
    <path d="M481 68H380V154H77V652H279" stroke="#ddd" />
    <path d="M279 652L481 391" stroke="#ddd" shapeRendering="auto" />
    <path d="M55 198H77M55 260H77M55 198V260M60 210H77M60 250H77" />
    <path d="M77 199H481M77 261H481" stroke="#fff" strokeWidth="2" />
    <path d="M77 213V247M0 337H77" stroke={GREY} />
    <ORing x={196} y={199} />
    <ORing x={196} y={260} flip />
    <ORing x={297} y={199} />
    <ORing x={297} y={260} flip />
    <ORing x={427} y={199} />
    <ORing x={427} y={260} flip />
    <path d="M233 199V206H283V199M233 260V253H283V260" stroke="#fff" />
    <path d="M251 207V252M265 207V252" stroke={GREY} />
    <path d="M265 222H367M265 238H367M412 222H652M412 238H652" stroke={GREY} strokeDasharray="8 1" />
    <path d="M340 198L367 214M340 260L367 246" shapeRendering="auto" />
    <path d="M367 203H412M367 257H412M412 203V257M367 203V257M371 211H388V249H371ZM400 206V254" />
    <path d="M262 262V483H-276M279 262V425M279 440V499H-276" stroke="#888" strokeDasharray="8 1" />
    <path d="M279 423L520 600M279 442L500 610" stroke="#888" shapeRendering="auto" strokeDasharray="7 2" />
    <path d="M422 68V132H681M438 68V118H681" stroke="#888" strokeDasharray="8 1" />
    <path d="M481 68V97M481 361V391M481 104H681M481 355H681" stroke={GREY} />
    <path d="M681 97V361" stroke={GREY} />
    <path d="M481 154H681M481 303H681M481 154V303M652 154V303" stroke="#eee" />
    <path d="M481 199H600V154M481 260H600V303" stroke="#eee" />
    <path d="M481 180L495 155L511 303L527 155L540 303L557 155L573 303L586 155L600 290M500 155L500 260M532 155L530 260M561 155V260M590 155V200" stroke="#777" shapeRendering="auto" strokeDasharray="10 2" />
    <ORing x={612} y={156} w={28} />
    <ORing x={612} y={302} w={28} flip />
    <g shapeRendering="auto" stroke="#ccc">
      <path d="M407 480L369 454L328 512L363 543" />
      <path d="M434 454L472 485L379 601L343 572Z" />
      <path d="M455 514L476 532L474 543L489 556L510 552L528 568L527 578L541 588L500 641L487 632L462 628L458 606L443 590L430 592L403 574" />
      <path d="M476 532L430 592M474 543L443 590M489 556L458 606M510 552L462 628M528 568L482 629M455 538L440 560" />
    </g>
  </g>
);

const Barrel = () => (
  <g transform="translate(610 150) scale(.333333)" shapeRendering="crispEdges">
    <rect x="-149" y="68" width="574" height="29" fill="url(#wide)" stroke="#ddd" />
    <rect x="-149" y="361" width="574" height="30" fill="url(#wide)" stroke="#ddd" />
    <rect x="425" y="68" width="101" height="101" fill="url(#dense)" stroke="#ccc" />
    <rect x="425" y="289" width="101" height="102" fill="url(#dense)" stroke="#ccc" />
    <path d="M425 97V361M526 169V289" stroke="#ddd" />
    <path
      d="M22 255L33 195L52 263L68 195L87 263L104 195L122 265L139 195L157 265L174 195L193 265L210 195L228 265L245 195L264 265L281 195L300 265L316 195L336 265L351 195L372 265L388 200L402 258L420 200L438 255"
      stroke="#ddd"
      shapeRendering="auto"
    />
    <path d="M526 130H541V118H685L698 130V166H510V154H526Z" fill="url(#dense)" stroke="#ccc" />
    <path d="M526 328H541V340H685L698 328V292H510V304H526Z" fill="url(#dense)" stroke="#ccc" />
    <path d="M541 130H690M541 328H690M680 154V166M680 292V304M510 154H690M510 304H690" stroke="#fff" />
    <path d="M526 169H698V133H726V199H526Z" fill="url(#back)" stroke="#ccc" />
    <path d="M526 289H698V325H726V260H526Z" fill="url(#back)" stroke="#ccc" />
    <path d="M726 199V260" stroke="#ccc" />
    <rect x="380" y="202" width="58" height="54" fill="url(#cyan)" stroke="#1f9aa2" />
    <rect x="438" y="190" width="88" height="78" fill="url(#cyan)" stroke="#25b9c2" />
    <rect x="474" y="202" width="52" height="48" fill="url(#gold)" stroke="#3fae9a" />
    <path d="M484 214V240M496 212V238M508 214V240" stroke="#b5412c" strokeDasharray="3 6" />
    <path d="M546 199H766V154H818V190H888L898 200V211H546ZM546 260H766V304H818V268H888L898 258V248H546Z" fill="url(#gold)" stroke="#d6d22e" />
    <path d="M898 200V258" stroke="#e6e23c" />
    <rect x="526" y="199" width="20" height="62" fill="url(#gold)" stroke="#d6d22e" />
    <path d="M546 199H576V263H546ZM606 190H617V268H606ZM526 193H576" stroke="#eee" />
  </g>
);

/* the stroke sits on the tile's edge, so half of its width is what shows */
const Hatch = ({ id, size, angle, color, width }) => (
  <pattern id={id} width={size} height={size} patternUnits="userSpaceOnUse" patternTransform={`rotate(${angle})`}>
    <path d={`M0 0V${size}`} stroke={color} strokeWidth={width} fill="none" />
  </pattern>
);

const Drawing = () => (
  <Canvas role="img" aria-label="Condor.dwg drawing">
    <defs>
      <Hatch id="wide" size={14} angle={40} color="#ddd" width={5} />
      <Hatch id="dense" size={6} angle={-42} color="#c4c4c4" width={5} />
      <Hatch id="back" size={10} angle={-42} color="#ccc" width={5} />
      <Hatch id="cyan" size={10} angle={-40} color="#25b9c2" width={5} />
      <Hatch id="gold" size={6} angle={-42} color="#c2be30" width={5} />
    </defs>
    <g transform="translate(-22 -73)" fill="none" stroke="#ccc" strokeWidth="1">
      <style>{'.cad path,.cad rect,.cad circle{vector-effect:non-scaling-stroke}'}</style>
      <g shapeRendering="crispEdges">
        <path d="M23.500 74V800M964.500 74V800" stroke="#ddd" />
        <path d="M960.500 74V800" stroke="#888" strokeWidth="2" />
        <path d="M956.500 73.500H964.500V76.500H956.500Z" stroke="#ddd" />
        <path d="M134.500 177V271M134.500 321V800" stroke="#ddd" />
        <path d="M134 216.500H252M134 230.500H251M134 397.500H252M134 411.500H254" />
        <path d="M308 262.500H425M308.500 274V354M308 367.500H425M425.500 262V368" />
        <path d="M308 280H425M308 347H425" stroke="#fff" strokeWidth="2" />
        <path d="M308 344.500H425" stroke="#777" strokeDasharray="5 1" />
      </g>
      <path d="M134.500 271L99 287L164 298L134.500 321" stroke="#ddd" />
      <path d="M252 216.500Q259 217 264 222L309 262.500M251 230.500Q256 231 260 235L308.500 274M252 397.500Q258 397 263 392L308.500 353M254 411.500Q260 411 265 407L309 367.500" />
      <g className="cad"><Body /><Barrel /></g>
      <g stroke="#ddd">
        <path d="M28.500 450.500H36.500V458.500H28.500ZM32.500 454V408M32.500 454.500H70" shapeRendering="crispEdges" />
        <path d="M29.500 416L32.500 408L36 416ZM70.500 451L79 454.500L70.500 457Z" />
      </g>
      <g fill="#bbb" stroke="none" fontFamily="Liberation Sans, sans-serif" fontSize="13">
        <text x="30" y="401">Y</text>
        <text x="86" y="459">X</text>
      </g>
    </g>
  </Canvas>
);

/* ---------- command window ---------- */

const CommandDock = styled.section`
  display: flex;
  gap: 2px;
  height: 58px;
  padding: 5px 4px 2px 5px;
  background: linear-gradient(#fff 1px, ${FACE} 1px 3px, #7f7c6e 3px 5px, ${FACE} 5px);
`;

const CommandGrip = styled(Grip)`
  height: 42px;
  margin: 5px 0 0;
`;

const CommandBox = styled.div`
  flex: 1;
  margin-top: 6px;
  border: solid #4a4943;
  border-width: 2px 0 0 1px;
  background: #fff;
  font: 10px/13px "Liberation Mono", monospace;
`;

const History = styled.pre`
  margin: 0;
  height: 27px;
  padding-left: 1px;
  font: inherit;
  border-bottom: 1px solid #c4c1b2;
`;

const CommandLine = styled.label`
  display: flex;
  gap: 6px;
  padding: 2px 0 0 1px;
`;

const CommandInput = styled.input`
  flex: 1;
  outline: 0;
  height: 12px;
`;

const ScrollColumn = styled.div`
  display: flex;
  flex-direction: column;
  justify-content: space-between;
  width: 11px;
  height: 28px;
  margin-top: 8px;
`;

const ScrollArrow = styled.button`
  display: grid;
  place-items: center;
  height: 12px;
  border-radius: 2px;
  background: #c4d4fb;
`;

/* ---------- status bar ---------- */

const StatusBar = styled.footer`
  display: flex;
  align-items: center;
  gap: 2px;
  height: 16px;
  padding: 1px 3px 0 2px;
  border-top: 1px solid ${SHADOW};
`;

const Coordinates = styled.output`
  width: 146px;
  height: 13px;
  padding-left: 2px;
  border: 1px solid;
  border-color: ${SHADOW} #fff #fff ${SHADOW};
`;

const Toggle = styled.button`
  height: 13px;
  padding: 0 1px;
  border: 1px solid;
  border-color: ${(p) => (p.$on ? '#555 #fff #fff #555' : '#fff #aca899 #aca899 #fff')};
  background: ${(p) => (p.$on ? '#f3f1e6' : FACE)};
  line-height: 12px;
`;

const StatusTray = styled.div`
  display: flex;
  align-items: center;
  gap: 2px;
  margin-left: auto;
`;

const StatusButton = styled.button`
  display: grid;
  place-items: center;
  width: 13px;
  height: 13px;
`;

/* ---------- notification ---------- */

const Balloon = styled.aside`
  position: absolute;
  right: 12px;
  bottom: 44px;
  width: 189px;
  height: 58px;
  padding: 6px 6px 0 7px;
  border: 1px solid #000;
  border-radius: 10px;
  background: #ffffe1;
`;

const BalloonHead = styled.div`
  display: flex;
  align-items: center;
  gap: 7px;
  height: 13px;
`;

const BalloonTitle = styled.h2`
  flex: 1;
  margin: 0;
  font-size: 9px;
  font-size: 8px;
  line-height: 12px;
  white-space: nowrap;
`;

const BalloonClose = styled.button`
  display: grid;
  place-items: center;
  width: 11px;
  height: 11px;
  border: 1px solid #55534a;
  background: #f5f2dd;
`;

const BalloonText = styled.p`
  margin: 3px 0 2px 4px;
  white-space: nowrap;
`;

const BalloonLink = styled.a`
  margin-left: 4px;
  color: #1b1b9c;
  white-space: nowrap;
`;

const BalloonTail = styled.svg`
  position: absolute;
  right: 43px;
  bottom: -15px;
`;

/* ---------- task bar ---------- */

const TaskBar = styled.footer`
  display: flex;
  align-items: stretch;
  height: 21px;
  background: linear-gradient(#3c81f3, #245edb 12%, #2663e0 85%, #1941a5);
  color: #fff;
`;

const StartButton = styled.button`
  display: flex;
  align-items: center;
  gap: 4px;
  width: 72px;
  padding-left: 8px;
  border-radius: 0 8px 8px 0;
  background: linear-gradient(#5fb35b, #3c963c 20%, #3a9a3a 75%, #2a6e2a);
  font: italic bold 13px/20px "Liberation Sans", sans-serif;
  text-shadow: 1px 1px 1px #1f4d1f;
`;

const QuickLaunch = styled.div`
  display: flex;
  align-items: center;
  gap: 4px;
  width: 87px;
  padding-left: 9px;
`;

const QuickMore = styled.button`
  margin: 0 5px 8px auto;
  line-height: 8px;
`;

const Tasks = styled.div`
  display: flex;
  flex: 1;
  gap: 1px;
  min-width: 0;
`;

const TaskButton = styled.button`
  display: flex;
  align-items: center;
  gap: 3px;
  flex: 0 1 119px;
  margin: 1px 0;
  padding-left: 7px;
  border-radius: 2px;
  background: ${(p) => (p.$on ? '#1d4fc0' : 'linear-gradient(#5a9bff, #3c81f0 20%, #3a7df0)')};
  white-space: nowrap;
  overflow: hidden;
`;

const Tray = styled.div`
  display: flex;
  align-items: center;
  gap: 1px;
  width: 91px;
  background: linear-gradient(#3fbdf7 0, #1290e9 15%, #1597ee 80%, #0d6fc0) no-repeat 8px 0;
`;

const Clock = styled.time`
  margin-left: 7px;
  white-space: nowrap;
`;

const MENUS = ['File', 'Edit', 'View', 'Insert', 'Format', 'Tools', 'Draw', 'Dimension', 'Modify', 'Express', 'Tiện ích', 'Window', 'Help'];
const TOGGLES = [['SNAP'], ['GRID'], ['ORTHO', 1], ['POLAR'], ['OSNAP', 1], ['OTRACK'], ['DUCS', 1], ['DYN'], ['LWT', 1], ['MODEL', 1]];
const TASKS = [
  ['folder', 'van ban'],
  ['word', 'thuyet minh TKBVTC-...'],
  ['chrome', 'Súng hơi và thiết bị h...'],
  ['word', 'thuyet minh TKBVTC(...'],
  ['folder', 'ban ve'],
  ['app', 'AutoCAD 2007 - [D:\\...', true],
];

const Glyph = ({ d, color = '#fff', size = 7 }) => (
  <svg width={size} height={size} viewBox="0 0 8 8" aria-hidden="true"><path d={d} fill="none" stroke={color} strokeWidth="1.500" /></svg>
);

const Solid = ({ d }) => (
  <svg width="8" height="8" viewBox="0 0 8 8" aria-hidden="true"><path d={d} fill="#111" /></svg>
);

export default function App() {
  return (
    <Window>
      <GlobalStyle />
      <TitleBar>
        <Icon name="app" size={12} />
        <Title>AutoCAD 2007 - [D:\My Documents\Downloads\sung hoi\pcp\Condor\ban ve\Condor.dwg]</Title>
        <CaptionButton aria-label="Minimize"><Glyph d="M1 7h4" /></CaptionButton>
        <CaptionButton aria-label="Restore"><Glyph d="M3 3V1h4v4H5M1 3h4v4H1z" /></CaptionButton>
        <CaptionButton $close aria-label="Close"><Glyph d="M1 1l6 6M7 1L1 7" /></CaptionButton>
      </TitleBar>
      <MenuBar>
        <MenuIcon><Icon name="doc" size={12} /></MenuIcon>
        {MENUS.map((m) => <MenuItem key={m}>{m}</MenuItem>)}
        <MdiButtons>
          <MdiButton aria-label="Minimize drawing"><Glyph color="#444" d="M1 7h5" /></MdiButton>
          <MdiButton aria-label="Restore drawing"><Glyph color="#444" d="M3 3V1h4v4H5M1 3h4v4H1z" /></MdiButton>
          <MdiButton aria-label="Close drawing"><Glyph color="#444" d="M1 1l6 6M7 1L1 7" /></MdiButton>
        </MdiButtons>
      </MenuBar>

      <ToolRow $height={22}>
        <Bar>
          <Grip />
          {STANDARD.map((group, i) => (
            <React.Fragment key={group[0]}>
              {i > 0 && <Divider />}
              {group.map((t) => (t[0] === '>' ? <DropTool key={t} label={t.slice(1)} off={t.includes('redo')} /> : <Tool key={t} name={t} />))}
            </React.Fragment>
          ))}
        </Bar>
        <Bar>
          <Grip />
          <Tool name="textStyle" />
          <Combo label="Text style" value="Standard" width={75} />
          <Divider />
          <Tool name="dimStyle" />
          <Combo label="Dimension style" value="ISO-25" width={75} />
          <Tool name="tableStyle" />
          <Combo label="Table style" value="Standard" width={75} />
        </Bar>
        <Bar>
          <Grip />
          <Tool name="dist" /><Tool name="area" /><Tool name="mass" />
          <Divider />
          <Tool name="list" /><Tool name="idPoint" />
        </Bar>
      </ToolRow>

      <ToolRow $height={21}>
        <Bar>
          <Grip />
          <Tool name="layers" />
          <Combo label="Layer" value="0" width={223} indent={62}>
            <Icon name="bulb" size={12} /><Icon name="sun" size={12} /><Icon name="vpFreeze" size={12} /><Icon name="lock" size={12} /><Swatch />
          </Combo>
          <Tool name="layerPrev" /><Tool name="layerState" />
        </Bar>
        <Bar>
          <Grip />
          <Combo label="Color" value="ByLayer" width={112} indent={12} wide><Swatch /></Combo>
          <Combo label="Linetype" value="ByLayer" width={120} indent={50} wide><Rule $width={43} /></Combo>
          <Combo label="Lineweight" value="ByLayer" width={93} indent={32} wide><Rule $width={26} /></Combo>
          <Combo label="Plot style" value="ByColor" width={92} indent={7} off wide />
        </Bar>
      </ToolRow>

      <Work>
        <SideTools>
          <SideBar>
            <SideGrip />
            <SideStack $height={314}>{DRAW.map((t) => <SideTool key={t} name={t} />)}</SideStack>
          </SideBar>
        </SideTools>
        <DocumentPane>
          <Drawing />
          <TabStrip>
            <TabArrow aria-label="First tab"><Solid d="M1 0h1v8H1zM7 0v8L3 4z" /></TabArrow>
            <TabArrow aria-label="Previous tab"><Solid d="M6 0v8L2 4z" /></TabArrow>
            <TabArrow aria-label="Next tab"><Solid d="M2 0v8l4-4z" /></TabArrow>
            <TabArrow aria-label="Last tab"><Solid d="M1 0v8l4-4zM6 0h1v8H6z" /></TabArrow>
            <SheetTab $on>Model</SheetTab>
            <SheetTab>II1</SheetTab>
            <SheetTab>II2</SheetTab>
          </TabStrip>
        </DocumentPane>
        <SideTools>
          <SideBar>
            <SideGrip />
            {DIMENSION.map((group, i) => (
              <React.Fragment key={group[0]}>
                {i > 0 && <SideDivider />}
                {group.map((t) => <SideTool key={t} name={t} />)}
              </React.Fragment>
            ))}
          </SideBar>
          <SideBar>
            <SideGrip />
            <SideStack $height={281}>{MODIFY.map((t) => <SideTool key={t} name={t} />)}</SideStack>
          </SideBar>
        </SideTools>
      </Work>

      <CommandDock>
        <CommandGrip />
        <CommandBox>
          <History>{'Command:\nCommand: _.erase 1 found'}</History>
          <CommandLine>Command:<CommandInput type="text" /></CommandLine>
        </CommandBox>
        <ScrollColumn>
          <ScrollArrow aria-label="Scroll up"><Glyph color="#4d6185" d="M1 5l3-3 3 3" /></ScrollArrow>
          <ScrollArrow aria-label="Scroll down"><Glyph color="#4d6185" d="M1 3l3 3 3-3" /></ScrollArrow>
        </ScrollColumn>
      </CommandDock>

      <StatusBar>
        <Coordinates>7271.1712, -54.1852, 0.0000</Coordinates>
        {TOGGLES.map(([t, on]) => <Toggle key={t} $on={on} aria-pressed={!!on}>{t}</Toggle>)}
        <StatusTray>
          {['comm', 'padlock', 'pubTray', 'std'].map((t) => <StatusButton key={t} aria-label={t}><Icon name={t} /></StatusButton>)}
          <DropTool label="Tray settings" />
          <StatusButton aria-label="Clean screen"><Icon name="clean" /></StatusButton>
        </StatusTray>
      </StatusBar>

      <TaskBar>
        <StartButton><Icon name="flag" size={14} />start</StartButton>
        <QuickLaunch>
          {['chrome', 'desktop', 'mail'].map((t) => <StatusButton key={t} aria-label={t}><Icon name={t} size={12} /></StatusButton>)}
          <QuickMore aria-label="More">»</QuickMore>
        </QuickLaunch>
        <Tasks>
          {TASKS.map(([icon, text, on]) => <TaskButton key={text} $on={on}><Icon name={icon} size={12} />{text}</TaskButton>)}
        </Tasks>
        <Tray>
          <StatusButton aria-label="Show hidden icons"><Icon name="hideTray" size={12} /></StatusButton>
          <Icon name="kasp" size={12} />
          <Icon name="net" size={12} />
          <Clock>11:01 AM</Clock>
        </Tray>
      </TaskBar>

      <Balloon role="status">
        <BalloonHead>
          <Icon name="info" size={12} />
          <BalloonTitle>Plot and Publish Job Complete</BalloonTitle>
          <BalloonClose aria-label="Close notification"><Glyph color="#000" d="M1 1l6 6M7 1L1 7" /></BalloonClose>
        </BalloonHead>
        <BalloonText>No errors or warnings found</BalloonText>
        <BalloonLink href="#details">Click to view plot and publish details...</BalloonLink>
        <BalloonTail width="16" height="16" viewBox="0 0 16 16" aria-hidden="true">
          <path d="M1 1L15 15V1" fill="#ffffe1" stroke="#000" />
          <path d="M2 0H14V2H2z" fill="#ffffe1" />
        </BalloonTail>
      </Balloon>
    </Window>
  );
}
